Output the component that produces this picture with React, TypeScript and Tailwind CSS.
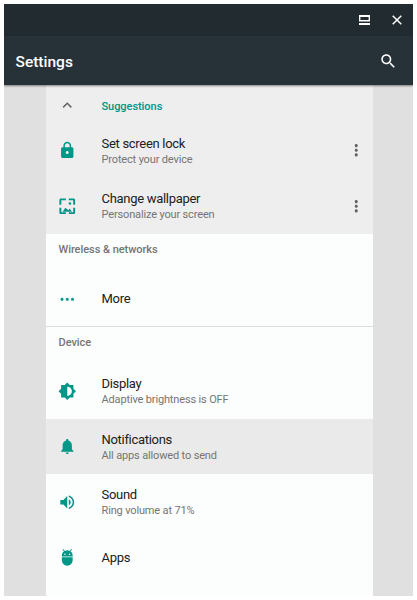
import type { ReactNode } from "react";

const ICONS = {
  lock: "M18 8h-1V6c0-2.76-2.24-5-5-5S7 3.24 7 6v2H6c-1.1 0-2 .9-2 2v10c0 1.1.9 2 2 2h12c1.1 0 2-.9 2-2V10c0-1.1-.9-2-2-2zm-6 9c-1.1 0-2-.9-2-2s.9-2 2-2 2 .9 2 2-.9 2-2 2zm3.1-9H8.9V6c0-1.71 1.39-3.1 3.1-3.1s3.1 1.39 3.1 3.1v2z",
  wallpaper: "M4.3 4.3h6V1.8H4c-1.3 0-2.2.9-2.2 2.2v6h2.5V4.3zm5.2 9.7L6 19h12l-2.8-4-1.7 2.2L9.5 14zM17.2 8.5a1.7 1.7 0 1 0-3.4 0 1.7 1.7 0 0 0 3.4 0zM20 1.8h-6v2.5h5.7V10h2.5V4c0-1.3-.9-2.2-2.2-2.2zm-.3 17.9H14v2.5h6c1.3 0 2.2-.9 2.2-2.2v-6h-2.5v5.7zM4.3 14H1.8v6c0 1.3.9 2.2 2.2 2.2h6.3v-2.5h-6V14z",
  more: "M5.2 10a2 2 0 1 0 0 4 2 2 0 0 0 0-4zm6.8 0a2 2 0 1 0 0 4 2 2 0 0 0 0-4zm6.8 0a2 2 0 1 0 0 4 2 2 0 0 0 0-4z",
  display: "M20 15.31L23.31 12 20 8.69V4h-4.69L12 .69 8.69 4H4v4.69L.69 12 4 15.31V20h4.69L12 23.31 15.31 20H20v-4.69zM12 18V6c3.31 0 6 2.69 6 6s-2.69 6-6 6z",
  bell: "M12 22c1.1 0 2-.9 2-2h-4c0 1.1.89 2 2 2zm6-6v-5c0-3.07-1.64-5.64-4.5-6.32V4c0-.83-.67-1.5-1.5-1.5s-1.5.67-1.5 1.5v.68C7.63 5.36 6 7.92 6 11v5l-2 2v1h16v-1l-2-2z",
  sound: "M3 9v6h4l5 5V4L7 9H3zm13.5 3c0-1.77-1.02-3.29-2.5-4.03v8.05c1.48-.73 2.5-2.25 2.5-4.02zM14 3.23v2.06c2.89.86 5 3.54 5 6.71s-2.11 5.85-5 6.71v2.06c4.01-.91 7-4.49 7-8.77s-2.99-7.86-7-8.77z",
  android: "M5 16c0 3.87 3.13 7 7 7s7-3.13 7-7v-4H5v4zM16.12 4.37l2.1-2.1-.82-.83-2.3 2.31C14.16 3.28 13.12 3 12 3s-2.16.28-3.09.75L6.6 1.44l-.82.83 2.1 2.1C6.14 5.64 5 7.68 5 10v1h14v-1c0-2.32-1.14-4.36-2.88-5.63zM9 9c-.55 0-1-.45-1-1s.45-1 1-1 1 .45 1 1-.45 1-1 1zm6 0c-.55 0-1-.45-1-1s.45-1 1-1 1 .45 1 1-.45 1-1 1z",
  chevronUp: "M12 8l-6 6 1.41 1.41L12 10.83l4.59 4.58L18 14z",
  kebab: "M12 8c1.1 0 2-.9 2-2s-.9-2-2-2-2 .9-2 2 .9 2 2 2zm0 2c-1.1 0-2 .9-2 2s.9 2 2 2 2-.9 2-2-.9-2-2-2zm0 6c-1.1 0-2 .9-2 2s.9 2 2 2 2-.9 2-2-.9-2-2-2z",
  search: "M15.5 14h-.79l-.28-.27C15.41 12.59 16 11.11 16 9.5 16 5.91 13.09 3 9.5 3S3 5.91 3 9.5 5.91 16 9.5 16c1.61 0 3.09-.59 4.23-1.57l.27.28v.79l5 4.99L20.49 19l-4.99-5zm-6 0C7.01 14 5 11.99 5 9.5S7.01 5 9.5 5 14 7.01 14 9.5 11.99 14 9.5 14z",
};

type IconName = keyof typeof ICONS;

function Icon({ name, className = "" }: { name: IconName; className?: string }) {
  return (
    <svg viewBox="0 0 24 24" fill="currentColor" className={`size-[18.5px] shrink-0 ${className}`}>
      <path d={ICONS[name]} />
    </svg>
  );
}

type Item = { icon: IconName; title: string; desc?: string; menu?: boolean; active?: boolean };

const SUGGESTIONS: Item[] = [
  { icon: "lock", title: "Set screen lock", desc: "Protect your device", menu: true },
  { icon: "wallpaper", title: "Change wallpaper", desc: "Personalize your screen", menu: true },
];

const DEVICE: Item[] = [
  { icon: "display", title: "Display", desc: "Adaptive brightness is OFF" },
  { icon: "bell", title: "Notifications", desc: "All apps allowed to send", active: true },
  { icon: "sound", title: "Sound", desc: "Ring volume at 71%" },
  { icon: "android", title: "Apps" },
];

function Row({ icon, title, desc, menu, active }: Item) {
  return (
    <div className={`flex h-[55.6px] items-center pr-[8px] pl-[12px] ${active ? "bg-[#eaeaea]" : ""}`}>
      <Icon name={icon} className="text-[#009688]" />
      <div className={`ml-[25px] flex-1 whitespace-nowrap ${desc ? "pt-[2px]" : "pt-px"}`}>
        <p className="text-[13px] leading-[16px] tracking-[-0.3px] text-[#212121]">{title}</p>
        {desc && <p className="text-[11px] leading-[15px] tracking-[-0.15px] text-[#757575]">{desc}</p>}
      </div>
      {menu && <Icon name="kebab" className="text-[#636363]" />}
    </div>
  );
}

function SectionTitle({ children }: { children: ReactNode }) {
  return (
    <h2 className="h-[36px] pt-[8px] pl-[12.5px] text-[11px] leading-[15px] font-medium tracking-[-0.05px] text-[#757575]">
      {children}
    </h2>
  );
}

export default function App() {
  return (
    <div className="h-[600px] w-[417px] bg-white p-1 font-['Roboto',sans-serif]">
      <div className="flex h-[592px] w-[409px] flex-col overflow-hidden bg-[#e0e0e0]">
        {/* Window controls */}
        <div className="flex h-8 shrink-0 items-center justify-end gap-[22px] bg-[#212b30] pr-[11px] text-white">
          <svg viewBox="0 0 11 10" fill="currentColor" className="h-[10px] w-[11px]">
            <path d="M0 0h11v6.6H0zM1.4 1.9v3.1h8.2V1.9zM0 8h11v2H0z" fillRule="evenodd" />
          </svg>
          <svg viewBox="0 0 10 10" fill="none" stroke="currentColor" strokeWidth="1.5" className="size-[10px]">
            <path d="M.7.7l8.6 8.6M9.3.7L.7 9.3" />
          </svg>
        </div>
        <header className="z-10 flex h-[49px] shrink-0 items-center justify-between bg-[#263238] pr-[15.5px] pl-[11.5px] text-white shadow-[0_1px_2px_rgba(0,0,0,0.45)]">
          <h1 className="pt-[3px] text-[15.5px] leading-5 font-medium">Settings</h1>
          <Icon name="search" className="mt-px" />
        </header>

        <main className="ml-[42px] w-[327px] flex-1 bg-[#fcfdfd]">
          <section className="h-[149px] bg-[#eeeeee]">
            <div className="flex h-[37.5px] items-center pt-[3px] pl-[12px]">
              <Icon name="chevronUp" className="text-[#636363]" />
              <h2 className="ml-[25px] pt-[3px] text-[11px] font-medium tracking-[-0.05px] text-[#009688]">Suggestions</h2>
            </div>
            {SUGGESTIONS.map((item) => (
              <Row key={item.title} {...item} />
            ))}
          </section>
          <section className="h-[93px] border-b border-[#dcdcdc]">
            <SectionTitle>Wireless &amp; networks</SectionTitle>
            <div className="pt-px">
              <Row icon="more" title="More" />
            </div>
          </section>
          <section>
            <SectionTitle>Device</SectionTitle>
            {DEVICE.map((item) => (
              <Row key={item.title} {...item} />
            ))}
          </section>
        </main>
      </div>
    </div>
  );
}
